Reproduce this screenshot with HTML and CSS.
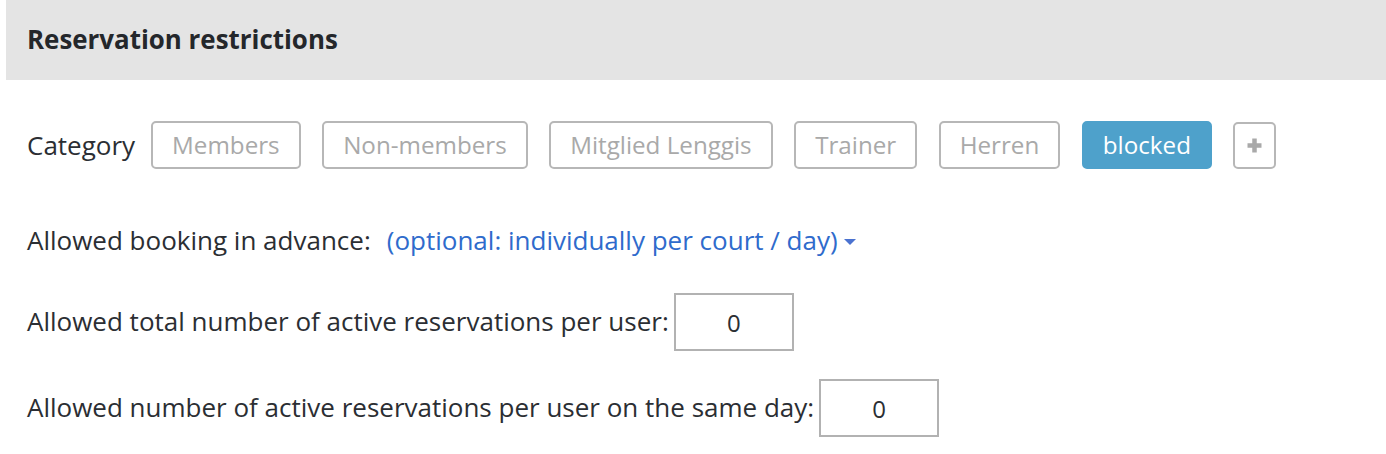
FILE: index.html
```html
<!DOCTYPE html>
<html>
<head>
<meta charset="utf-8">
<link rel="stylesheet" href="styles.css">
</head>
<body>
<div class="panel">
  <div class="panel-head">Reservation restrictions</div>
  <div class="panel-body">
    <div class="cat-row">
      <span class="cat-label">Category</span>
      <div class="cat-list">
        <button class="cat-btn">Members</button>
        <button class="cat-btn">Non-members</button>
        <button class="cat-btn">Mitglied Lenggis</button>
        <button class="cat-btn">Trainer</button>
        <button class="cat-btn">Herren</button>
        <button class="cat-btn active">blocked</button>
        <button class="add-btn" aria-label="add">
          <svg width="17" height="17" viewBox="0 0 17 17"><path d="M8.5 1.5v14M1.5 8.5h14" stroke="#a9a9a9" stroke-width="4.5" fill="none"/></svg>
        </button>
      </div>
    </div>
    <div class="advance-row">
      <span class="label">Allowed booking in advance:</span>
      <a class="dropdown-link">(optional: individually per court / day)</a><span class="caret"></span>
    </div>
    <div class="field-row">
      <span class="label">Allowed total number of active reservations per user:</span>
      <input class="num-input" type="text" value="0">
    </div>
    <div class="field-row second">
      <span class="label">Allowed number of active reservations per user on the same day:</span>
      <input class="num-input" type="text" value="0">
    </div>
  </div>
</div>
</body>
</html>
```
FILE: styles.css
```css
* { box-sizing: border-box; }
html, body { margin: 0; padding: 0; background: #fff; }
body {
  font-family: "Open Sans", "Liberation Sans", sans-serif;
  font-size: 26px;
  color: #2b2e33;
}
.panel { padding-left: 6px; }
.panel-head {
  height: 80px;
  background: #e4e4e4;
  padding-left: 21px;
  padding-bottom: 2px;
  display: flex;
  align-items: center;
  font-weight: 700;
  font-size: 25.9px;
  color: #24272b;
}
.panel-body { padding-left: 21px; }
.cat-row {
  display: flex;
  align-items: center;
  margin-top: 41px;
  height: 48px;
}
.cat-label { margin-right: 16px; }
.cat-list { display: flex; gap: 21.5px; align-items: center; }
.cat-btn {
  font-family: inherit;
  font-size: 24.2px;
  height: 48px;
  padding: 0 19px;
  border: 2px solid #b7b7b7;
  border-radius: 5px;
  background: #fff;
  color: #a9a9a9;
  line-height: 1;
}
.cat-btn.active {
  background: #4ea1cb;
  border-color: #4ea1cb;
  color: #fff;
}
.add-btn {
  width: 43px;
  height: 47px;
  border: 2px solid #b7b7b7;
  border-radius: 5px;
  background: #fff;
  padding: 0;
  display: flex;
  align-items: center;
  justify-content: center;
}
.add-btn svg { filter: blur(0.6px); }
.advance-row {
  display: flex;
  align-items: center;
  margin-top: 56px;
  height: 30px;
}
.advance-row .label { margin-right: 16px; }
.dropdown-link { color: #2f6bcc; cursor: pointer; }
.caret {
  width: 0; height: 0;
  margin-left: 6px;
  margin-top: 4px;
  border-left: 6px solid transparent;
  border-right: 6px solid transparent;
  border-top: 6px solid #4a72d0;
}
.field-row {
  display: flex;
  align-items: center;
  margin-top: 38px;
}
.field-row .label { padding-bottom: 3px; }
.field-row.second { margin-top: 28px; }
.field-row .label { margin-right: 5px; }
.num-input {
  width: 120px;
  height: 58px;
  border: 2px solid #b2b2b2;
  font-family: inherit;
  font-size: 24px;
  color: #2b2e33;
  text-align: center;
  padding: 0;
  outline: none;
}
```
